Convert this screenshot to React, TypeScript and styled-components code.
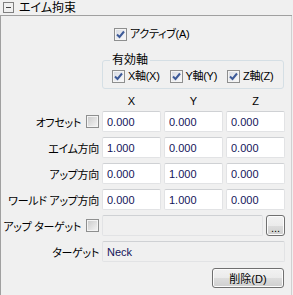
import React from 'react';
import styled, { createGlobalStyle } from 'styled-components';

const GlobalStyle = createGlobalStyle`
  html, body {
    margin: 0;
    padding: 0;
    background: #f0f0f0;
  }
  body {
    font-family: "Liberation Sans", "Noto Sans CJK JP", sans-serif;
    font-size: 12px;
    color: #000;
    font-feature-settings: "palt";
  }
`;

const Panel = styled.div`
  width: 292px;
  min-height: 295px;
  box-sizing: border-box;
  display: flex;
  flex-direction: column;
`;

const Header = styled.div`
  height: 16px;
  box-sizing: border-box;
  border-bottom: 1px solid #a0a0a0;
  display: flex;
  align-items: center;
  gap: 5px;
  padding-left: 3px;
  line-height: 14px;
`;

const Collapse = styled.span`
  width: 9px;
  height: 9px;
  border: 1px solid #808080;
  display: flex;
  align-items: center;
  justify-content: center;

  &::after {
    content: '';
    width: 5px;
    height: 1px;
    background: #404040;
  }
`;

const Body = styled.div`
  flex: 1;
  border-left: 1px solid #a0a0a0;
  border-right: 1px solid #d0d0d0;
  padding-top: 12px;
`;

const CheckLabel = styled.label`
  display: flex;
  align-items: center;
  gap: 3px;
  height: 13px;
  line-height: 13px;
  font-size: 11px;
  letter-spacing: -0.3px;
  white-space: nowrap;
`;

const ActiveRow = styled(CheckLabel)`
  padding-left: 113px;
`;

const Box = styled.span<{ $checked?: boolean }>`
  width: 13px;
  height: 13px;
  box-sizing: border-box;
  flex: none;
  border: 1px solid #8e8f8f;
  box-shadow: inset 0 0 0 1px #f4f4f4;
  background: ${p => (p.$checked
    ? 'linear-gradient(135deg, #d6dae2, #fbfbfb)'
    : 'linear-gradient(135deg, #c9c9c9, #f6f6f6)')};
  display: flex;
  align-items: center;
  justify-content: center;
`;

const Check = ({ checked }: { checked?: boolean }) => (
  <Box $checked={checked}>
    {checked && (
      <svg width="11" height="11" viewBox="0 0 11 11">
        <path d="M2 5.5 L4.5 8 L9 2.5" fill="none" stroke="#3d5a98" strokeWidth="2" />
      </svg>
    )}
  </Box>
);

const AxisGroup = styled.fieldset`
  margin: 12px 0 0 101px;
  width: 182px;
  box-sizing: border-box;
  border: 1px solid #d5dfe5;
  border-radius: 3px;
  padding: 3px 0 5px 9px;
  display: flex;
  gap: 10px;
`;

const Legend = styled.legend`
  padding: 0 2px;
  margin-left: -2px;
  line-height: 14px;
`;

const Grid = styled.div`
  margin-top: 1px;
  display: grid;
  grid-template-columns: 97px repeat(3, 59px);
  grid-template-rows: 16px repeat(6, 21px);
  column-gap: 3px;
  row-gap: 5px;
  padding-left: 1px;
`;

const ColHead = styled.div`
  font-size: 11px;
  text-align: center;
  line-height: 11px;
  align-self: end;
  margin-bottom: -1px;
`;

const RowLabel = styled.div`
  display: flex;
  justify-content: flex-end;
  align-items: center;
  gap: 5px;
  white-space: nowrap;
  font-size: 11px;
  letter-spacing: -0.3px;
`;

const Field = styled.input<{ $dim?: boolean; $span?: number }>`
  box-sizing: border-box;
  width: 100%;
  min-width: 0;
  height: 21px;
  margin: 0;
  padding: 0 0 0 4px;
  border: 1px solid #e2e3e5;
  border-top-color: #cfd1d4;
  border-radius: 2px;
  background: ${p => (p.$dim ? '#f0f0f0' : '#fff')};
  color: #14145a;
  font-family: "Liberation Sans", "Noto Sans CJK JP", sans-serif;
  font-size: 11px;
  outline: none;
  grid-column: ${p => (p.$span ? `span ${p.$span}` : 'auto')};
`;

const TargetCell = styled.div`
  grid-column: span 3;
  display: flex;
  gap: 3px;
`;

const WinButton = styled.button`
  box-sizing: border-box;
  margin: 0;
  padding: 0;
  border: 1px solid #707070;
  border-radius: 3px;
  background: linear-gradient(#f2f2f2 0%, #ebebeb 50%, #dddddd 50%, #cfcfcf 100%);
  box-shadow: inset 0 0 0 1px #fcfcfc;
  color: #000;
  font-family: "Liberation Sans", "Noto Sans CJK JP", sans-serif;
  font-size: 12px;
`;

const DotsButton = styled(WinButton)`
  width: 19px;
  height: 21px;
  flex: none;
  font-size: 11px;
  line-height: 24px;
`;

const Footer = styled.div`
  display: flex;
  justify-content: flex-end;
  padding: 6px 7px 0 0;
`;

const DeleteButton = styled(WinButton)`
  width: 72px;
  height: 20px;
  font-size: 11px;
`;

const rows = [
  { label: 'オフセット', box: true, values: ['0.000', '0.000', '0.000'] },
  { label: 'エイム方向', values: ['1.000', '0.000', '0.000'] },
  { label: 'アップ方向', values: ['0.000', '1.000', '0.000'] },
  { label: 'ワールド アップ方向', values: ['0.000', '1.000', '0.000'] },
];

export default function App() {
  return (
    <>
      <GlobalStyle />
      <Panel>
        <Header>
          <Collapse />
          エイム拘束
        </Header>
        <Body>
          <ActiveRow>
            <Check checked />
            アクティブ(A)
          </ActiveRow>
          <AxisGroup>
            <Legend>有効軸</Legend>
            <CheckLabel><Check checked />X軸(X)</CheckLabel>
            <CheckLabel><Check checked />Y軸(Y)</CheckLabel>
            <CheckLabel><Check checked />Z軸(Z)</CheckLabel>
          </AxisGroup>
          <Grid>
            <span />
            <ColHead>X</ColHead>
            <ColHead>Y</ColHead>
            <ColHead>Z</ColHead>
            {rows.map(r => (
              <React.Fragment key={r.label}>
                <RowLabel>
                  {r.label}
                  {r.box && <Check />}
                </RowLabel>
                {r.values.map((v, i) => (
                  <Field key={i} readOnly value={v} />
                ))}
              </React.Fragment>
            ))}
            <RowLabel>
              アップ ターゲット
              <Check />
            </RowLabel>
            <TargetCell>
              <Field $dim readOnly value="" />
              <DotsButton>...</DotsButton>
            </TargetCell>
            <RowLabel>ターゲット</RowLabel>
            <Field $dim $span={3} readOnly value="Neck" />
          </Grid>
          <Footer>
            <DeleteButton>削除(D)</DeleteButton>
          </Footer>
        </Body>
      </Panel>
    </>
  );
}
